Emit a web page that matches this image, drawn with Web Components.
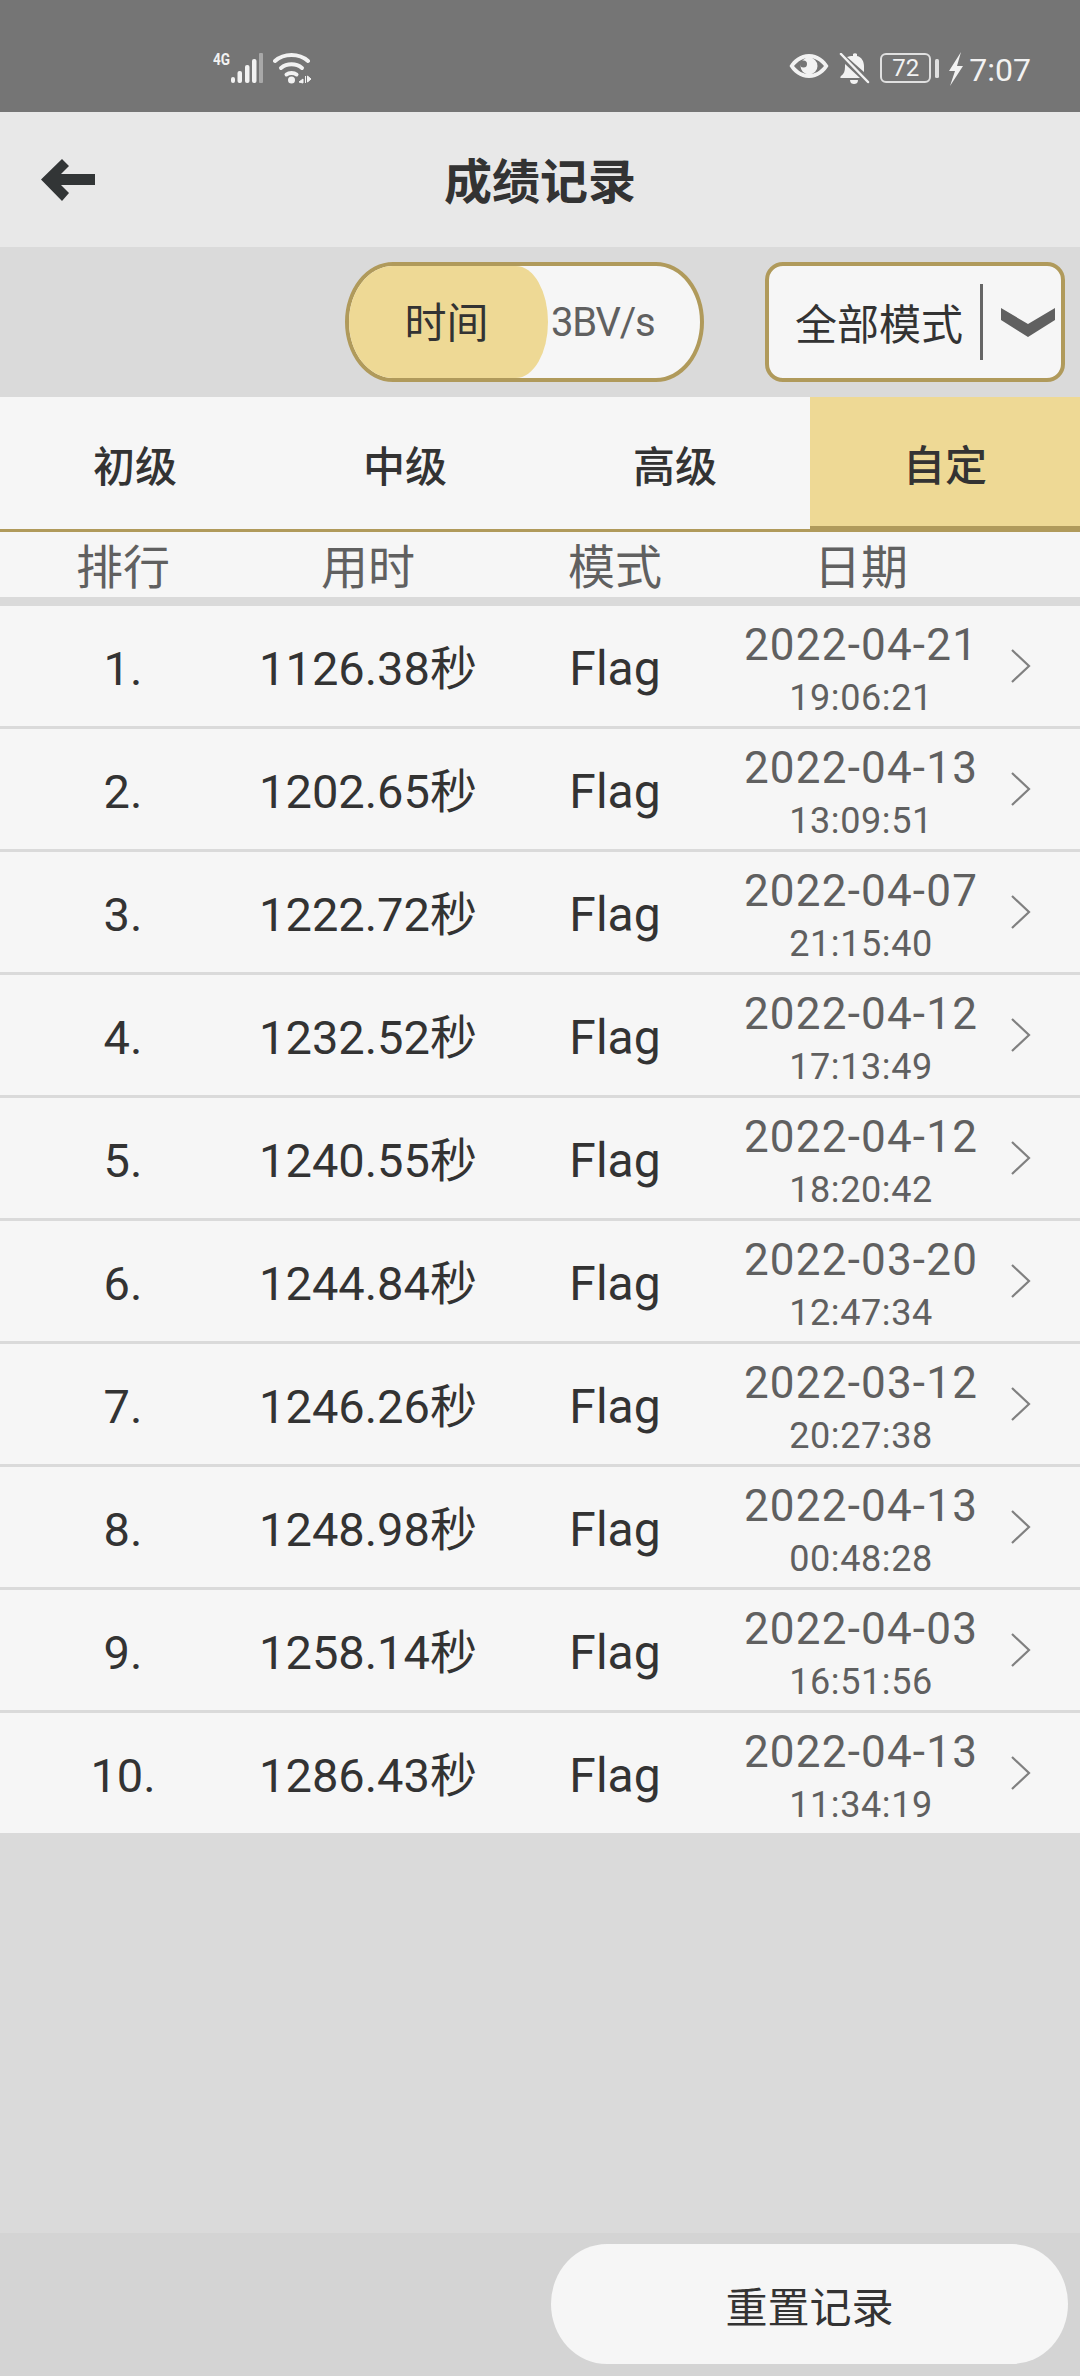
<!DOCTYPE html>
<html lang="zh">
<head>
<meta charset="utf-8">
<title>成绩记录</title>
<style>
html, body { margin: 0; padding: 0; }
body {
    width: 1080px;
    height: 2376px;
    display: flex;
    flex-direction: column;
    background: #dadada;
    color: #333;
    font-family: Roboto, "Noto Sans CJK SC", sans-serif;
}
.spacer { flex: 1; }
</style>
</head>
<body>
<status-bar></status-bar>
<title-bar>成绩记录</title-bar>
<filter-bar></filter-bar>
<level-tabs></level-tabs>
<record-header></record-header>
<record-list></record-list>
<div class="spacer"></div>
<reset-bar>重置记录</reset-bar>

<script>
class StatusBar extends HTMLElement {
    constructor() {
        super();
        this.attachShadow({ mode: "open" });
    }
    connectedCallback() {
        this.shadowRoot.innerHTML = `
<style>
:host { display: flex; height: 112px; background: #757575; color: #f2f2f2; padding: 53px 49px 0 213px; box-sizing: border-box; justify-content: space-between; align-items: flex-start; font-family: Roboto, sans-serif; }
.group { display: flex; align-items: flex-start; }
.net { font-size: 16px; line-height: 16px; font-weight: 700; width: 18px; margin-top: -1px; transform: scaleX(.85); transform-origin: left top; white-space: nowrap; }
svg { display: block; }
.battery { width: 51px; height: 30px; box-sizing: border-box; border: 2px solid #e0e0e0; border-radius: 6px; display: flex; align-items: center; justify-content: center; font-size: 24px; line-height: 24px; margin: 0 4px 0 10px; }
.time { font-size: 32px; line-height: 32px; margin: 1px 0 0 5px; }
</style>
<div class="group">
    <div class="net">4G</div>
    <svg width="33" height="31" viewBox="0 0 33 31">
        <rect x="0" y="24" width="4" height="6" rx="2" fill="#f2f2f2"/>
        <rect x="6.500" y="18" width="4.500" height="12" rx="2" fill="#f2f2f2"/>
        <rect x="14" y="12" width="4.500" height="18" rx="2" fill="#f2f2f2"/>
        <rect x="21" y="6" width="4.500" height="24" rx="2" fill="#f2f2f2"/>
        <rect x="28" y="0" width="4" height="30" rx="1" fill="#a8a8a8"/>
    </svg>
    <svg width="39" height="31" viewBox="0 0 39 31" style="margin-left:9px">
        <g fill="none" stroke="#f2f2f2" stroke-width="4" stroke-linecap="round">
            <path d="M2 8 C11 0 26 0 35 8"/>
            <path d="M8 15 C14 10 23 10 29 15"/>
            <path d="M13.500 21.500 C16 19.500 21 19.500 23.500 21.500"/>
        </g>
        <circle cx="18.500" cy="27" r="3.500" fill="#f2f2f2"/>
        <path d="M30 26 L26 29 L30 30 Z M32.500 23 L32.500 30 M34.500 23 L38 26 L34.500 29 Z" fill="#f2f2f2" stroke="#f2f2f2" stroke-width="1"/>
    </svg>
</div>
<div class="group">
    <svg width="40" height="31" viewBox="0 0 40 31">
        <path d="M20 1 C11 1 4 7 0.500 13 C4 19 11 25 20 25 C29 25 36 19 39.500 13 C36 7 29 1 20 1 Z M20 5 C26 5 31 8 35 13 C31 18 26 21 20 21 C14 21 9 18 5 13 C9 8 14 5 20 5 Z" fill="#f2f2f2" fill-rule="evenodd"/>
        <circle cx="20" cy="13" r="8.500" fill="#f2f2f2"/>
        <circle cx="14.500" cy="11" r="3.500" fill="#757575"/>
    </svg>
    <svg width="31" height="33" viewBox="0 0 31 33" style="margin-left:10px">
        <path d="M14 1 C15 0 17 0 18 1 L18 3 C23 4 25 9 25 13 L25 19 L8 4 C9 3.500 12 3 14 3 Z" fill="#f2f2f2"/>
        <path d="M6 11 L21 25 L2 25 C1 25 1 24 2 23 C5 21 6 18 6 14 Z" fill="#f2f2f2"/>
        <path d="M11 27 L19 27 C19 30 17 31 15 31 C13 31 11 30 11 27 Z" fill="#f2f2f2"/>
        <path d="M2 1 L29 29" stroke="#f2f2f2" stroke-width="2.500" stroke-linecap="round"/>
    </svg>
    <div class="battery">72</div>
    <svg width="4" height="30" viewBox="0 0 4 30">
        <rect x="0" y="6" width="4" height="19" rx="1.500" fill="#e0e0e0"/>
    </svg>
    <svg width="16" height="34" viewBox="0 0 16 34" style="margin-left:9px;margin-top:-1px">
        <path d="M13 0 L1 19 L7 19 L2 34 L15 14 L9 14 Z" fill="#f2f2f2"/>
    </svg>
    <div class="time">7:07</div>
</div>`;
    }
}

class TitleBar extends HTMLElement {
    constructor() {
        super();
        this.attachShadow({ mode: "open" });
    }
    connectedCallback() {
        this.shadowRoot.innerHTML = `
<style>
:host { display: flex; align-items: center; height: 135px; background: #e8e8e8; color: #333; position: relative; }
.back { position: absolute; left: 41px; top: 47px; width: 54px; height: 42px; }
.title { flex: 1; text-align: center; font-size: 48px; font-weight: 700; line-height: 60px; font-family: "Noto Sans CJK SC", sans-serif; margin: 0 0 3px 0; }
</style>
<svg class="back" viewBox="0 0 54 42"><path d="M0 20.500 L21 0 L28 7 L20 15 L54 15 L54 26 L20 26 L28 34 L21 42 Z" fill="#323536"/></svg>
<div class="title"><slot></slot></div>`;
    }
}

class FilterBar extends HTMLElement {
    constructor() {
        super();
        this.attachShadow({ mode: "open" });
    }
    connectedCallback() {
        this.shadowRoot.innerHTML = `
<style>
:host { display: flex; justify-content: flex-end; height: 150px; padding: 15px 15px 0 0; box-sizing: border-box; background: #dadada; font-family: "Noto Sans CJK SC", sans-serif; }
.toggle { display: flex; width: 359px; height: 120px; box-sizing: border-box; border: 4px solid #b09a5b; border-radius: 48px / 60px; background: #f6f6f6; overflow: hidden; margin-right: 61px; }
.on { width: 199px; background: #eed995; border-radius: 0 32px 32px 0 / 0 56px 56px 0; display: flex; align-items: center; justify-content: center; font-size: 42px; color: #333; padding: 0 4px 5px 0; box-sizing: border-box; }
.off { display: flex; align-items: center; font-size: 40px; letter-spacing: -1.2px; color: #606060; font-family: Roboto, sans-serif; margin-left: 3px; }
.select { display: flex; align-items: center; width: 300px; height: 120px; box-sizing: border-box; border: 4px solid #b09a5b; border-radius: 18px; background: #f6f6f6; }
.label { font-size: 42px; color: #333; margin: 0 0 2px 26px; width: 185px; white-space: nowrap; }
.sep { width: 3px; height: 76px; background: #666; }
svg { display: block; margin-left: 18px; }
</style>
<div class="toggle"><div class="on">时间</div><div class="off">3BV/s</div></div>
<div class="select">
    <div class="label">全部模式</div>
    <div class="sep"></div>
    <svg width="54" height="29" viewBox="0 0 54 29"><path d="M0 0 L27 16 L54 0 L54 12 L27 29 L0 12 Z" fill="#606060"/></svg>
</div>`;
    }
}

class LevelTabs extends HTMLElement {
    constructor() {
        super();
        this.attachShadow({ mode: "open" });
    }
    connectedCallback() {
        const levels = ["初级", "中级", "高级", "自定"];
        this.shadowRoot.innerHTML = `
<style>
:host { display: grid; grid-template-columns: repeat(4, 1fr); height: 135px; background: #f6f6f6; border-bottom: 3px solid #b09a5b; box-sizing: border-box; font-family: "Noto Sans CJK SC", sans-serif; }
div { display: flex; align-items: center; justify-content: center; font-size: 42px; font-weight: 500; color: #333; box-sizing: border-box; }
.active { background: #eed995; border-bottom: 6px solid #b09a5b; margin-bottom: -3px; padding-top: 1px; }
</style>
${levels.map((l, i) => `<div class="${i === 3 ? "active" : ""}">${l}</div>`).join("")}`;
    }
}

class RecordHeader extends HTMLElement {
    constructor() {
        super();
        this.attachShadow({ mode: "open" });
    }
    connectedCallback() {
        this.shadowRoot.innerHTML = `
<style>
:host { display: grid; grid-template-columns: 246px 244px 250px 242px 1fr; height: 65px; background: #f6f6f6; color: #606060; font-size: 47px; font-family: "Noto Sans CJK SC", sans-serif; margin-bottom: 9px; }
div { text-align: center; line-height: 64px; }
</style>
<div>排行</div><div>用时</div><div>模式</div><div>日期</div>`;
    }
}

class RecordRow extends HTMLElement {
    constructor() {
        super();
        this.attachShadow({ mode: "open" });
    }
    connectedCallback() {
        const a = n => this.getAttribute(n);
        this.shadowRoot.innerHTML = `
<style>
:host { display: grid; grid-template-columns: 246px 244px 250px 242px 1fr; align-items: center; height: 120px; background: #f6f6f6; color: #333; font-size: 47px; font-family: Roboto, "Noto Sans CJK SC", sans-serif; }
.cell { text-align: center; line-height: 60px; padding-top: 5px; }
.flag { font-size: 48px; }
.date { text-align: center; color: #606060; font-size: 44px; letter-spacing: 1.2px; line-height: 52px; padding-top: 11px; white-space: nowrap; }
.date span { display: block; font-size: 36px; letter-spacing: .6px; line-height: 54px; }
svg { display: block; margin-left: 29px; }
</style>
<div class="cell">${a("rank")}</div>
<div class="cell">${a("time")}秒</div>
<div class="cell flag">Flag</div>
<div class="date">${a("date")}<span>${a("clock")}</span></div>
<svg width="20" height="34" viewBox="0 0 20 34"><path d="M1 1 L18 17 L1 33" fill="none" stroke="#808080" stroke-width="2.200"/></svg>`;
    }
}

class RecordList extends HTMLElement {
    constructor() {
        super();
        this.attachShadow({ mode: "open" });
    }
    connectedCallback() {
        const records = [
            ["1.", "1126.38", "2022-04-21", "19:06:21"],
            ["2.", "1202.65", "2022-04-13", "13:09:51"],
            ["3.", "1222.72", "2022-04-07", "21:15:40"],
            ["4.", "1232.52", "2022-04-12", "17:13:49"],
            ["5.", "1240.55", "2022-04-12", "18:20:42"],
            ["6.", "1244.84", "2022-03-20", "12:47:34"],
            ["7.", "1246.26", "2022-03-12", "20:27:38"],
            ["8.", "1248.98", "2022-04-13", "00:48:28"],
            ["9.", "1258.14", "2022-04-03", "16:51:56"],
            ["10.", "1286.43", "2022-04-13", "11:34:19"],
        ];
        this.shadowRoot.innerHTML = `
<style>
:host { display: flex; flex-direction: column; gap: 3px; background: #dadada; }
</style>
${records.map(r => `<record-row rank="${r[0]}" time="${r[1]}" date="${r[2]}" clock="${r[3]}"></record-row>`).join("")}`;
    }
}

class ResetBar extends HTMLElement {
    constructor() {
        super();
        this.attachShadow({ mode: "open" });
    }
    connectedCallback() {
        this.shadowRoot.innerHTML = `
<style>
:host { display: flex; justify-content: flex-end; height: 143px; padding: 11px 12px 0 0; box-sizing: border-box; background: #d4d4d4; }
button { width: 517px; height: 120px; border: 0; border-radius: 56px / 60px; background: #f6f6f6; color: #333; font-size: 42px; font-family: "Noto Sans CJK SC", sans-serif; padding: 0; }
</style>
<button><slot></slot></button>`;
    }
}

customElements.define("status-bar", StatusBar);
customElements.define("title-bar", TitleBar);
customElements.define("filter-bar", FilterBar);
customElements.define("level-tabs", LevelTabs);
customElements.define("record-header", RecordHeader);
customElements.define("record-row", RecordRow);
customElements.define("record-list", RecordList);
customElements.define("reset-bar", ResetBar);
</script>
</body>
</html>
